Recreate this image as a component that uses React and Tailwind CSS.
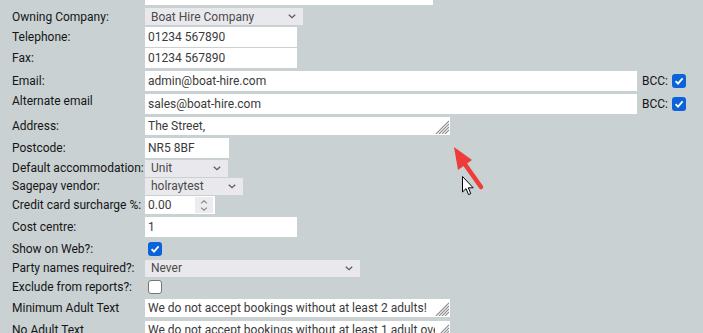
import React from 'react';

const Check = ({ checked }) =>
  checked ? (
    <span className="flex items-center justify-center w-[14px] h-[14px] rounded-[3px] bg-[#0b62d9]">
      <svg width="10" height="10" viewBox="0 0 10 10">
        <path d="M1.6 5.2 L4 7.6 L8.6 2.4" fill="none" stroke="#fff" strokeWidth="1.8" />
      </svg>
    </span>
  ) : (
    <span className="block w-[14px] h-[14px] rounded-[3px] border-[1.5px] border-[#767676] bg-white" />
  );

const Chevron = () => (
  <svg width="8" height="5" viewBox="0 0 8 5">
    <path d="M0.8 0.8 L4 3.8 L7.2 0.8" fill="none" stroke="#5a5a5a" strokeWidth="1.2" />
  </svg>
);

const Select = ({ w, value }) => (
  <div className={`flex items-center justify-between h-[17px] bg-[#e9e9ed] pl-[6px] pr-[7px] text-[#4a4a4a] ${w}`}>
    <span className="leading-none">{value}</span>
    <Chevron />
  </div>
);

const Input = ({ w, value }) => (
  <div className={`flex items-center h-[20px] bg-white pl-[3px] text-[#3a3a3a] ${w}`}>
    <span className="leading-none">{value}</span>
  </div>
);

// textarea with the old-style striped grip drawn in the corner
const Area = ({ value }) => (
  <div className="relative w-[305px] h-[18px]">
    <textarea
      readOnly
      rows={1}
      value={value}
      className="block w-full h-full bg-white pl-[3px] pr-[2px] py-[1px] leading-[16px] text-[12px] text-[#3a3a3a] resize-none overflow-hidden outline-none"
    />
    <svg className="absolute right-[1px] bottom-[1px] bg-white" width="14" height="14" viewBox="0 0 14 14">
      <g stroke="#8c8c8c" strokeWidth="1.1">
        <line x1="1" y1="14" x2="14" y2="1" />
        <line x1="4" y1="14" x2="14" y2="4" />
        <line x1="7" y1="14" x2="14" y2="7" />
        <line x1="10" y1="14" x2="14" y2="10" />
      </g>
    </svg>
  </div>
);

const Row = ({ h, label, top, children }) => (
  <div className={`flex ${top ? 'items-start' : 'items-center'} ${h}`}>
    <div className={`w-[145px] pl-[12px] whitespace-nowrap text-[#151515] ${top ? '-mt-[1px]' : ''}`}>{label}</div>
    {children}
  </div>
);

export default function App() {
  return (
    <div
      className="relative w-[703px] h-[333px] overflow-hidden bg-[#c9d1d3] text-[12px]"
      style={{ fontFamily: 'Roboto, "Liberation Sans", sans-serif' }}
    >
      <div className="flex h-[7px] pl-[145px]">
        <div className="w-[288px] h-[5px] bg-white" />
      </div>
      <Row h="h-[19px]" label="Owning Company:">
        <Select w="w-[158px]" value="Boat Hire Company" />
      </Row>
      <Row h="h-[21px]" label="Telephone:">
        <Input w="w-[152px]" value="01234 567890" />
      </Row>
      <Row h="h-[22px]" label="Fax:">
        <Input w="w-[152px]" value="01234 567890" />
      </Row>
      <Row h="h-[24px]" label="Email:">
        <Input w="w-[492px]" value="admin@boat-hire.com" />
        <span className="ml-[5px] text-[#151515]">BCC:</span>
        <span className="ml-[4px]"><Check checked /></span>
      </Row>
      <div className="flex items-center h-[22px]">
        <div className="w-[145px] pl-[12px] self-start -mt-[1px] text-[#151515]">Alternate email</div>
        <Input w="w-[492px]" value="sales@boat-hire.com" />
        <span className="ml-[5px] text-[#151515]">BCC:</span>
        <span className="ml-[4px]"><Check checked /></span>
      </div>
      <Row h="h-[22px]" label="Address:">
        <Area value="The Street," />
      </Row>
      <Row h="h-[22px]" label="Postcode:">
        <Input w="w-[84px]" value="NR5 8BF" />
      </Row>
      <Row h="h-[18px]" label="Default accommodation:">
        <Select w="w-[83px]" value="Unit" />
      </Row>
      <Row h="h-[18px]" label="Sagepay vendor:">
        <Select w="w-[98px]" value="holraytest" />
      </Row>
      <Row h="h-[20px]" label="Credit card surcharge %:">
        <div className="flex items-center justify-between w-[70px] h-[18px] bg-white pl-[3px] pr-[2px] text-[#3a3a3a]">
          <span className="leading-none">0.00</span>
          <div className="flex flex-col items-center justify-center gap-[3px] w-[18px] h-[16px] bg-[#ececef]">
            <svg width="8" height="4" viewBox="0 0 8 4">
              <path d="M1 3.4 L4 0.8 L7 3.4" fill="none" stroke="#8a8a8a" strokeWidth="1.1" />
            </svg>
            <svg width="8" height="4" viewBox="0 0 8 4">
              <path d="M1 0.6 L4 3.2 L7 0.6" fill="none" stroke="#8a8a8a" strokeWidth="1.1" />
            </svg>
          </div>
        </div>
      </Row>
      <Row h="h-[24px]" label="Cost centre:">
        <Input w="w-[152px]" value="1" />
      </Row>
      <Row h="h-[20px]" label="Show on Web?:">
        <span className="ml-[3px]"><Check checked /></span>
      </Row>
      <Row h="h-[18px]" label="Party names required?:">
        <Select w="w-[215px]" value="Never" />
      </Row>
      <Row h="h-[20px]" label="Exclude from reports?:">
        <span className="ml-[3px]"><Check /></span>
      </Row>
      <Row h="h-[22px]" label="Minimum Adult Text">
        <Area value="We do not accept bookings without at least 2 adults!" />
      </Row>
      <Row h="h-[22px]" label="No Adult Text">
        <Area value="We do not accept bookings without at least 1 adult over 18 years of age!" />
      </Row>

      <svg className="absolute left-0 top-0 pointer-events-none" width="703" height="333">
        <line x1="464" y1="163" x2="481" y2="187" stroke="#ee3d39" strokeWidth="4.5" strokeLinecap="round" />
        <polygon points="454,147 458,170 472,160" fill="#ee3d39" />
        <path
          d="M462.5 176.5 L462.5 192 L466 188.6 L468.6 194.6 L470.8 193.6 L468.3 187.8 L473.2 187.8 Z"
          fill="#fff"
          stroke="#000"
          strokeWidth="1"
          strokeLinejoin="round"
        />
      </svg>
    </div>
  );
}
